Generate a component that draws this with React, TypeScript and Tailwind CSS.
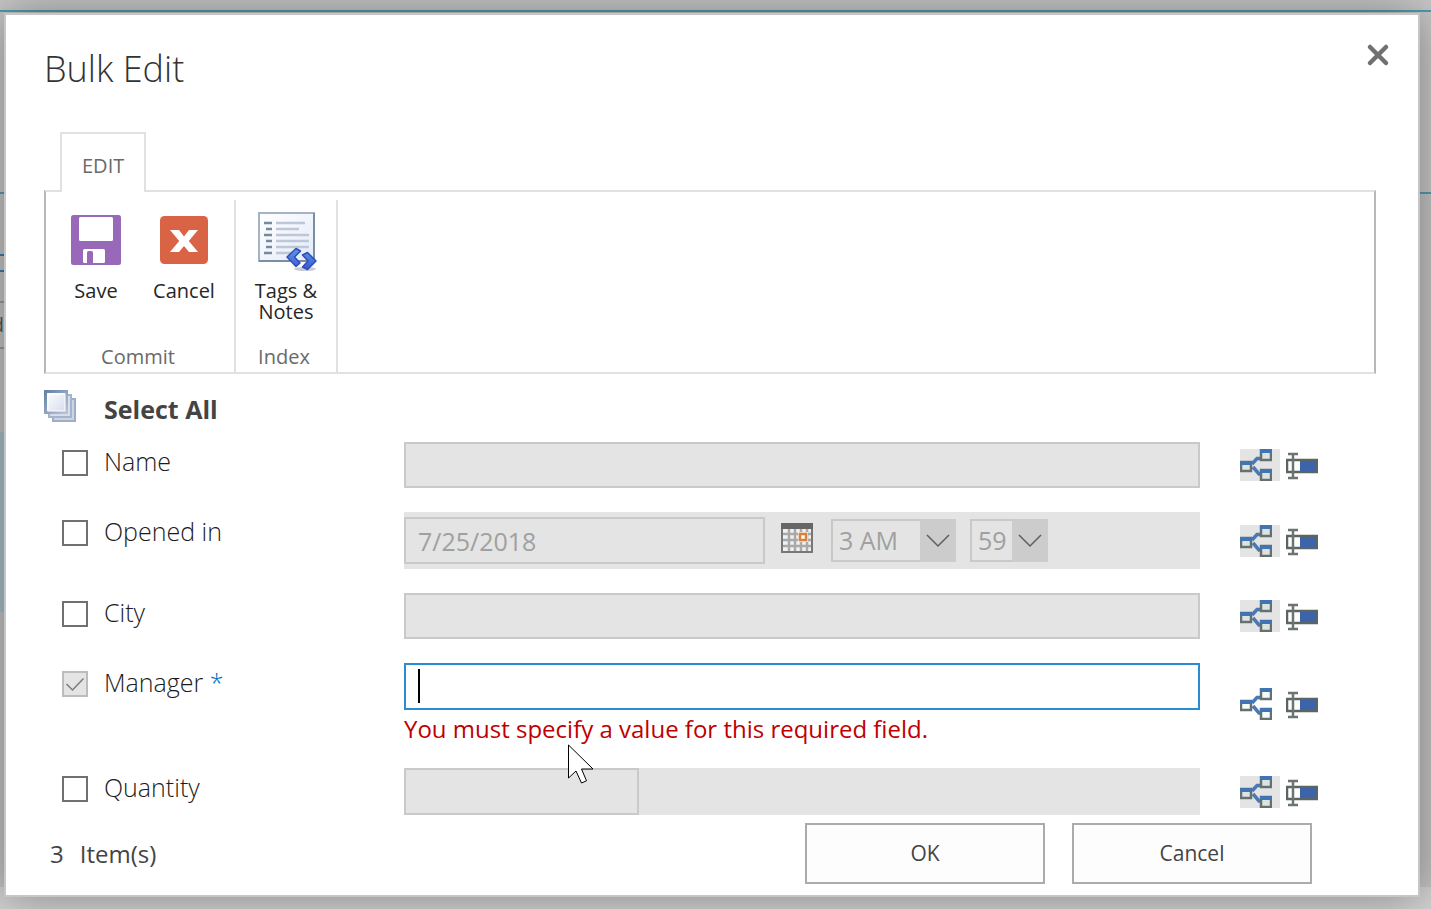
import { useState } from "react";
import type { ReactNode } from "react";

function SaveIcon() {
  return (
    <svg width="50" height="50" viewBox="0 0 50 50" aria-hidden="true">
      <rect width="50" height="50" rx="2.5" fill="#9868b9" />
      <rect x="8" y="2" width="34" height="24" rx="1.5" fill="#fff" />
      <rect x="12" y="34" width="22" height="14" rx="1.5" fill="#fff" />
      <path d="M16 50V37.5a1.5 1.5 0 0 1 1.5-1.5h3a1.5 1.5 0 0 1 1.5 1.5V50z" fill="#9868b9" />
    </svg>
  );
}

function CancelIcon() {
  return (
    <svg width="48" height="48" viewBox="0 0 48 48" aria-hidden="true">
      <rect width="48" height="48" rx="4.5" fill="#d96345" />
      <path d="M10 14h9l5 6.5 5-6.5h9l-9.2 11L38 36h-9l-5-6-5 6h-9l9.2-11z" fill="#fff" />
    </svg>
  );
}

function TagsIcon() {
  const lines = [
    { x: 6, y: 11, end: 47 },
    { x: 8, y: 17, end: 41 },
    { x: 6, y: 23, end: 51 },
    { x: 8, y: 29, end: 51 },
    { x: 8, y: 35, end: 51 },
    { x: 6, y: 41, end: 36 },
  ];

  return (
    <svg width="60" height="60" viewBox="-2 -2 60 60" overflow="visible" aria-hidden="true">
      <defs>
        <linearGradient id="note-paper" x1="0" y1="0" x2="1" y2="1">
          <stop offset="0" stopColor="#ffffff" />
          <stop offset="1" stopColor="#e3eaf8" />
        </linearGradient>
        <linearGradient id="note-arrow" x1="0" y1="0" x2="0" y2="1">
          <stop offset="0" stopColor="#5a9be8" />
          <stop offset="1" stopColor="#3b57cf" />
        </linearGradient>
      </defs>
      <rect x="1" y="1" width="55" height="48" fill="url(#note-paper)" stroke="#a5b3c3" strokeWidth="2" />
      <path d="M56 1v48H1" fill="none" stroke="#7b8ea3" strokeWidth="2" />
      {lines.map((line) => (
        <g key={line.y} strokeWidth="2.5">
          <path d={`M${line.x} ${line.y}H14`} stroke="#7788a0" />
          <path d={`M18 ${line.y}H${line.end}`} stroke="#bdc7d8" />
        </g>
      ))}
      <ellipse cx="47" cy="57" rx="11" ry="2" fill="#c9ccd4" />
      <path
        d="M29 45l9-8.500 4.500 2.500-6 6 5.500 6-4 3.500zM44.500 43l5-2.500 8.500 8.500-8.500 8.500-5-2.500 5.500-6z"
        fill="url(#note-arrow)"
        stroke="#2f4dbb"
        strokeWidth="1.5"
        strokeLinejoin="round"
      />
    </svg>
  );
}

function StackIcon() {
  return (
    <svg width="32" height="32" viewBox="0 0 32 32" aria-hidden="true">
      <defs>
        <linearGradient id="stack-sheet" x1="0" y1="0" x2="1" y2="1">
          <stop offset="0" stopColor="#ffffff" />
          <stop offset="1" stopColor="#d3dbec" />
        </linearGradient>
        <linearGradient id="stack-edge" x1="0" y1="0" x2="1" y2="1">
          <stop offset="0" stopColor="#6683a6" />
          <stop offset="1" stopColor="#b6c3d8" />
        </linearGradient>
      </defs>
      <rect x="9" y="9" width="22" height="22" fill="#ccd5e5" stroke="#9fadc5" strokeWidth="2" />
      <rect x="5" y="5" width="22" height="22" fill="#d7deea" stroke="#a6b4ca" strokeWidth="2" />
      <rect x="1.500" y="1.500" width="21" height="21" fill="url(#stack-sheet)" stroke="url(#stack-edge)" strokeWidth="3" />
      <rect x="4" y="4" width="17" height="17" fill="none" stroke="#fff" strokeWidth="1" />
    </svg>
  );
}

function CalendarIcon() {
  return (
    <svg width="32" height="30" viewBox="0 0 32 30" aria-hidden="true">
      <rect x="1" y="1" width="30" height="28" fill="#f1f1f1" stroke="#777" strokeWidth="2" />
      <path d="M8 6v22M14 6v22M20 6v22M26 6v22M2 11h28M2 17h28M2 23h28" stroke="#a9a9a9" strokeWidth="2.5" />
      <rect width="32" height="6" fill="#666" />
      <rect x="17" y="9" width="10" height="10" fill="#f6ece4" />
      <rect x="19" y="11" width="6" height="6" fill="#fff" stroke="#dc7f3a" strokeWidth="2.5" />
    </svg>
  );
}

function BranchIcon({ muted }: { muted: boolean }) {
  const box = muted ? "#dbe3e3" : "#f4fbfc";

  return (
    <svg width="32" height="32" viewBox="0 0 32 32" aria-hidden="true">
      <path d="M12 15l5-5.500h4M13 18l6 7h2" fill="none" stroke="#4a79b5" strokeWidth="3.500" />
      <g fill={box} stroke="#66716f" strokeWidth="2.500">
        <rect x="1" y="13" width="10" height="9" />
        <rect x="21" y="1" width="10" height="10" />
        <rect x="21" y="21" width="10" height="10" />
      </g>
      <path d="M0 14h12M20 2h12M20 22h12" stroke="#4274b2" strokeWidth="4" />
    </svg>
  );
}

function TextValueIcon() {
  return (
    <svg width="32" height="32" viewBox="0 0 32 32" aria-hidden="true">
      <rect x="1" y="11" width="30" height="12" fill="#fff" stroke="#5b6664" strokeWidth="2.5" />
      <rect x="14" y="12" width="16" height="10" fill="#3c64a8" />
      <path d="M2 5h10M2 29h10M7 5v24" fill="none" stroke="#6b7472" strokeWidth="2.5" />
    </svg>
  );
}

function RibbonButton({ label, icon }: { label: string; icon: ReactNode }) {
  return (
    <button type="button" className="flex w-16 flex-col items-center gap-2.5 text-xl leading-[21px] text-[#262626]">
      <span className="flex h-15 items-center">{icon}</span>
      <span>{label}</span>
    </button>
  );
}

function RibbonGroup({ label, children }: { label: string; children: ReactNode }) {
  return (
    <div className="mt-2 flex flex-col justify-between border-r-2 border-[#e1e1e1] px-[18px] pt-2.5 pb-[3px]">
      <div className="flex gap-6">{children}</div>
      <div className="pr-1 text-center text-xl leading-6 text-[#6a6a6a]">{label}</div>
    </div>
  );
}

function FieldRow({
  id,
  label,
  required = false,
  children,
}: {
  id: string;
  label: string;
  required?: boolean;
  children: ReactNode;
}) {
  const [checked, setChecked] = useState(required);

  return (
    <div className="flex">
      <div className="flex w-[342px] shrink-0 items-start gap-4">
        <span className="relative mt-2 flex">
          <input
            id={`${id}-use`}
            type="checkbox"
            checked={checked}
            disabled={required}
            onChange={(event) => setChecked(event.target.checked)}
            className="size-[26px] appearance-none border-2 border-[#707070] bg-white disabled:border-[#bcbcbc] disabled:bg-[#e4e4e4]"
          />
          {checked && (
            <svg width="26" height="26" viewBox="0 0 26 26" className="pointer-events-none absolute inset-0" aria-hidden="true">
              <path d="M4.500 13l6 6L21.500 7.500" fill="none" stroke="#7c7c7c" strokeWidth="1.500" />
            </svg>
          )}
        </span>
        <label htmlFor={`${id}-use`} className="text-[25px] leading-[38px] font-light text-[#1c1c1c]">
          {label}
          {required && <span className="text-[#0072c6]"> *</span>}
        </label>
      </div>
      <div className="min-w-0 flex-1">{children}</div>
      <div className="ml-10 flex items-center gap-1.5">
        <button
          type="button"
          aria-label={`${label} source`}
          className={required ? "w-10" : "w-10 bg-[#e4e4e4]"}
        >
          <BranchIcon muted={!required} />
        </button>
        <button type="button" aria-label={`${label} value`}>
          <TextValueIcon />
        </button>
      </div>
    </div>
  );
}

function TimeSelect({ label, value, width }: { label: string; value: string; width: string }) {
  return (
    <div className={`relative ${width}`}>
      <select
        aria-label={label}
        disabled
        className="h-[43px] w-full appearance-none border-2 border-[#c9c9c9] bg-[#e4e4e4] pl-1.5 text-[25px] leading-[39px] text-[#a0a0a0] opacity-100"
      >
        <option>{value}</option>
      </select>
      <span className="pointer-events-none absolute inset-y-0 right-0 flex w-9 items-center justify-center bg-[#cccccc]">
        <svg width="24" height="14" viewBox="0 0 24 14" aria-hidden="true">
          <path d="M1 1l11 11L23 1" fill="none" stroke="#5f5f5f" strokeWidth="1.500" />
        </svg>
      </span>
    </div>
  );
}

// Slice of the list page that stays visible around the dialog
function Backdrop() {
  return (
    <div className="absolute inset-0 flex flex-col overflow-hidden bg-[#c8c8c8]" aria-hidden="true">
      <div className="mt-2.5 h-[184px] border-y-2 border-[#4f9db2]" />
      <div className="flex-1 bg-[#c4c4c4] pt-15">
        <div className="h-[18px] w-1 border-y-2 border-[#2f7dba]" />
        <div className="mt-[29px] flex h-12 w-1 items-center justify-end overflow-hidden border-y-2 border-[#999] text-xl text-[#555]">
          d
        </div>
        <div className="mt-[83px] h-[180px] w-1 bg-[#a9bfc9]" />
      </div>
      <div className="h-[22px] bg-[#d2d2d2]" />
    </div>
  );
}

const inputClass =
  "block border-2 border-[#c9c9c9] bg-[#e4e4e4] px-3 text-[25px] text-[#a0a0a0] outline-none";

const footerButtonClass =
  "h-[61px] w-60 border-2 border-[#ababab] bg-[#fdfdfd] text-[21px] text-[#444]";

export default function App() {
  const [manager, setManager] = useState("");

  return (
    <div className="relative min-h-screen pt-[13px] pr-[11px] pb-3 pl-1 font-['Open_Sans','Noto_Sans',sans-serif]">
      <Backdrop />
      <div
        role="dialog"
        aria-labelledby="dialog-title"
        className="relative border-2 border-[#c6c6c6] bg-white pb-[11px] pl-[38px] shadow-[0_0_44px_rgba(0,0,0,0.38)]"
      >
        <header className="flex items-start justify-between pt-7 pr-7">
          <h1 id="dialog-title" className="text-4xl leading-[52px] font-light text-[#333]">
            Bulk Edit
          </h1>
          <button type="button" aria-label="Close">
            <svg width="24" height="24" viewBox="0 0 24 24" aria-hidden="true">
              <path d="M4 4l16 16M20 4L4 20" stroke="#707070" strokeWidth="4.500" strokeLinecap="round" />
            </svg>
          </button>
        </header>

        <div className="mt-[37px] mr-[42px]">
          <div className="relative z-10 -mb-0.5 flex pl-4">
            <button
              type="button"
              className="h-15 border-2 border-b-0 border-[#e1e1e1] bg-white px-5 pt-1.5 text-xl text-[#6a6a6a]"
            >
              EDIT
            </button>
          </div>
          <div className="flex h-[184px] border-2 border-x-[#b5b8bb] border-y-[#e1e1e1]">
            <RibbonGroup label="Commit">
              <RibbonButton label="Save" icon={<SaveIcon />} />
              <RibbonButton label="Cancel" icon={<CancelIcon />} />
            </RibbonGroup>
            <RibbonGroup label="Index">
              <RibbonButton label="Tags & Notes" icon={<TagsIcon />} />
            </RibbonGroup>
          </div>
        </div>

        <button type="button" className="mt-4 flex items-start gap-7">
          <StackIcon />
          <span className="text-[25px] leading-[38px] font-bold text-[#444]">Select All</span>
        </button>

        <form className="mt-3.5" onSubmit={(event) => event.preventDefault()}>
          <div className="flex flex-col gap-6 pr-25 pl-[18px]">
            <FieldRow id="name" label="Name">
              <input aria-label="Name" disabled className={`${inputClass} h-[46px] w-full`} />
            </FieldRow>
            <FieldRow id="opened" label="Opened in">
              <div className="flex items-center bg-[#e4e4e4] py-[5px]">
                <input
                  aria-label="Opened in date"
                  disabled
                  defaultValue="7/25/2018"
                  className={`${inputClass} h-[47px] w-[361px]`}
                />
                <button type="button" aria-label="Pick a date" className="mr-[18px] ml-4 pb-1.5">
                  <CalendarIcon />
                </button>
                <div className="flex gap-3.5">
                  <TimeSelect label="Hour" value="3 AM" width="w-[125px]" />
                  <TimeSelect label="Minute" value="59" width="w-[78px]" />
                </div>
              </div>
            </FieldRow>
            <FieldRow id="city" label="City">
              <input aria-label="City" disabled className={`${inputClass} h-[46px] w-full`} />
            </FieldRow>
            <FieldRow id="manager" label="Manager" required>
              <div className="relative">
                <input
                  aria-label="Manager"
                  aria-describedby="manager-error"
                  value={manager}
                  onChange={(event) => setManager(event.target.value)}
                  className="peer block h-[47px] w-full border-2 border-[#2a8dd4] bg-white px-3 text-[25px] text-[#262626] outline-none"
                />
                {!manager && (
                  <span className="pointer-events-none absolute top-1.5 left-3.5 h-[34px] w-0.5 bg-black peer-focus:hidden" />
                )}
                <p id="manager-error" className="pt-1 text-2xl leading-[30px] text-[#bf0000]">
                  You must specify a value for this required field.
                </p>
                <svg
                  width="26"
                  height="40"
                  viewBox="0 0 26 40"
                  className="pointer-events-none absolute top-[81px] left-41"
                  aria-hidden="true"
                >
                  <path d="M.5 1v33l7.500-7 5.500 12 5-2.200-5-11.800H25z" fill="#fff" stroke="#000" />
                </svg>
              </div>
            </FieldRow>
            <FieldRow id="quantity" label="Quantity">
              <div className="bg-[#e4e4e4]">
                <input aria-label="Quantity" disabled className={`${inputClass} h-[47px] w-[235px]`} />
              </div>
            </FieldRow>
          </div>

          <footer className="mt-2 flex items-center justify-between pr-[106px] pl-1.5">
            <div className="flex gap-4 text-2xl text-[#444]">
              <span>3</span>
              <span>Item(s)</span>
            </div>
            <div className="flex gap-[27px]">
              <button type="submit" className={footerButtonClass}>
                OK
              </button>
              <button type="button" className={footerButtonClass}>
                Cancel
              </button>
            </div>
          </footer>
        </form>
      </div>
    </div>
  );
}
